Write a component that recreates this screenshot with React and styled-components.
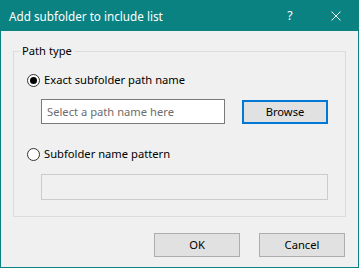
import React from "react";
import styled, { createGlobalStyle } from "styled-components";

const Global = createGlobalStyle`
  html, body { margin: 0; padding: 0; background: #f0f0f0; }
  * { box-sizing: border-box; }
`;

const FONT = `"Noto Sans", "Open Sans", sans-serif`;

const Window = styled.div`
  width: 359px;
  height: 268px;
  display: flex;
  flex-direction: column;
  background: #f0f0f0;
  border: 1px solid #0b8282;
  border-top: none;
  font-family: ${FONT};
  font-size: 11.2px;
  color: #000;
`;

const TitleBar = styled.div`
  height: 31px;
  margin: 0 -1px;
  background: #0b8282;
  display: flex;
  align-items: center;
  color: #fff;
  padding-left: 9px;
  flex-shrink: 0;
`;

const Title = styled.div`
  flex: 1;
  font-size: 11.7px;
  line-height: 16px;
`;

const TitleButton = styled.div`
  width: ${(p) => p.$w}px;
  height: 31px;
  display: flex;
  align-items: center;
  justify-content: center;
  font-size: 12.5px;
`;

const Body = styled.div`
  flex: 1;
  display: flex;
  flex-direction: column;
  padding: 12px 12px 10px 12px;
`;

const Group = styled.fieldset`
  margin: 0;
  padding: 0;
  border: 1px solid #dcdcdc;
  min-width: 0;
`;

const Legend = styled.legend`
  margin-left: 6px;
  padding: 0 2px;
  line-height: 16px;
`;

const GroupInner = styled.div`
  display: flex;
  flex-direction: column;
  padding: 13px 0 16px 0;
`;

const RadioRow = styled.label`
  display: flex;
  align-items: center;
  height: 16px;
  padding-left: 13px;
  margin-top: ${(p) => p.$mt || 0}px;
  gap: 4px;
  line-height: 16px;
`;

const RadioCircle = styled.span`
  width: 13px;
  height: 13px;
  border-radius: 50%;
  border: 1px solid #333;
  background: #fff;
  display: flex;
  align-items: center;
  justify-content: center;
  flex-shrink: 0;
  &::after {
    content: "";
    width: 7px;
    height: 7px;
    border-radius: 50%;
    background: ${(p) => (p.$checked ? "#000" : "transparent")};
  }
`;

const FieldRow = styled.div`
  display: flex;
  align-items: flex-end;
  padding-left: 27px;
  margin-top: ${(p) => p.$mt}px;
  gap: 17px;
`;

const TextBox = styled.div`
  width: ${(p) => p.$w}px;
  height: ${(p) => p.$h}px;
  border: 1px solid ${(p) => (p.$disabled ? "#cccccc" : "#7a7a7a")};
  background: ${(p) => (p.$disabled ? "#f0f0f0" : "#fff")};
  color: #6d6d6d;
  display: flex;
  align-items: center;
  padding-left: 5px;
  line-height: 16px;
`;

const Button = styled.div`
  width: 86px;
  height: 24px;
  background: #e1e1e1;
  border: ${(p) => (p.$focused ? "2px solid #0078d7" : "1px solid #adadad")};
  display: flex;
  align-items: center;
  justify-content: center;
  line-height: 16px;
`;

const ButtonBar = styled.div`
  display: flex;
  justify-content: flex-end;
  gap: 19px;
  margin-top: 16px;
  padding-right: 1px;
`;

export default function App() {
  return (
    <>
      <Global />
      <Window>
        <TitleBar>
          <Title>Add subfolder to include list</Title>
          <TitleButton $w={46}>?</TitleButton>
          <TitleButton $w={46}>
            <svg width="10" height="10" viewBox="0 0 10 10">
              <path d="M0.5 0.5 L9.5 9.5 M9.5 0.5 L0.5 9.5" stroke="#fff" strokeWidth="1" fill="none" />
            </svg>
          </TitleButton>
        </TitleBar>
        <Body>
          <Group>
            <Legend>Path type</Legend>
            <GroupInner>
              <RadioRow>
                <RadioCircle $checked />
                Exact subfolder path name
              </RadioRow>
              <FieldRow $mt={11}>
                <TextBox $w={184} $h={25}>Select a path name here</TextBox>
                <Button $focused>Browse</Button>
              </FieldRow>
              <RadioRow $mt={22}>
                <RadioCircle />
                Subfolder name pattern
              </RadioRow>
              <FieldRow $mt={12}>
                <TextBox $w={287} $h={26} $disabled />
              </FieldRow>
            </GroupInner>
          </Group>
          <ButtonBar>
            <Button>OK</Button>
            <Button>Cancel</Button>
          </ButtonBar>
        </Body>
      </Window>
    </>
  );
}
